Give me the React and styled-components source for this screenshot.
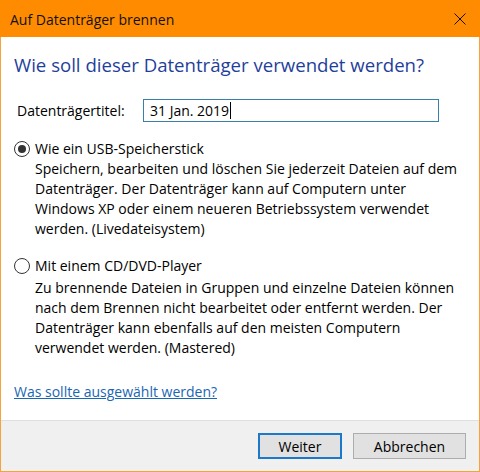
import React from "react";
import styled, { createGlobalStyle } from "styled-components";

const Global = createGlobalStyle`
  html, body {
    margin: 0;
    padding: 0;
    background: #ffffff;
  }
  body {
    font-family: "Open Sans", "Noto Sans", sans-serif;
    color: #000;
  }
`;

const Frame = styled.div`
  width: 480px;
  height: 472px;
  display: flex;
  flex-direction: column;
  box-sizing: border-box;
`;

const TitleBar = styled.div`
  height: 37px;
  flex: none;
  background: #ff8c00;
  display: flex;
  align-items: center;
  justify-content: space-between;
  padding: 0 14px 0 10px;
  box-sizing: border-box;
`;

const Caption = styled.span`
  font-size: 14px;
  color: #111;
  margin-top: 1px;
`;

const Close = styled.svg`
  width: 12px;
  height: 12px;
  margin-top: 1px;
`;

const Panel = styled.div`
  flex: 1;
  display: flex;
  flex-direction: column;
  border: 1px solid #f5a33d;
  border-top: none;
`;

const Content = styled.div`
  flex: 1;
  background: #fff;
  padding: 15px 13px 0 13px;
`;

const Heading = styled.h1`
  margin: 0;
  font-weight: 400;
  font-size: 18.6px;
  line-height: 26px;
  color: #1f3f9b;
`;

const TitleRow = styled.div`
  display: flex;
  align-items: center;
  margin-top: 21px;
  padding-left: 3px;
`;

const Label = styled.label`
  font-size: 14px;
  width: 126px;
  flex: none;
`;

const Field = styled.div`
  width: 296px;
  height: 23px;
  box-sizing: border-box;
  border: 1px solid #3a7eaa;
  display: flex;
  align-items: center;
  padding-left: 6px;
  font-size: 14px;
`;

const Caret = styled.span`
  display: inline-block;
  width: 1px;
  height: 17px;
  background: #000;
  margin-left: 1px;
`;

const Option = styled.div`
  display: grid;
  grid-template-columns: 21px 1fr;
  margin-top: ${(p) => p.$gap}px;
`;

const Radio = styled.span`
  width: 16px;
  height: 16px;
  box-sizing: border-box;
  border: 1px solid #333;
  border-radius: 50%;
  display: flex;
  align-items: center;
  justify-content: center;
  margin-top: 2px;
  &::after {
    content: "";
    width: 8px;
    height: 8px;
    border-radius: 50%;
    background: ${(p) => (p.$checked ? "#333" : "transparent")};
  }
`;

const OptionTitle = styled.div`
  font-size: 14px;
  line-height: 20px;
`;

const OptionText = styled.div`
  grid-column: 2;
  font-size: 14px;
  line-height: 20px;
  margin-top: ${(p) => p.$offset || 0}px;
`;

const Help = styled.a`
  display: inline-block;
  margin-top: 24px;
  font-size: 14px;
  line-height: 20px;
  color: #1a66b3;
  text-decoration: underline;
`;

const Footer = styled.div`
  height: 51px;
  flex: none;
  box-sizing: border-box;
  background: #f0f0f0;
  border-top: 1px solid #dfdfdf;
  display: flex;
  justify-content: flex-end;
  align-items: flex-start;
  gap: 11px;
  padding: 12px 13px 0 0;
`;

const Button = styled.button`
  height: 26px;
  width: ${(p) => p.$w}px;
  box-sizing: border-box;
  font-family: inherit;
  font-size: 14px;
  color: #000;
  background: #e1e1e1;
  border: ${(p) => (p.$default ? "2px solid #1c78c8" : "1px solid #adadad")};
  padding: 0;
`;

export default function App() {
  return (
    <>
      <Global />
      <Frame>
        <TitleBar>
          <Caption>Auf Datenträger brennen</Caption>
          <Close viewBox="0 0 12 12">
            <path d="M0.5 0.5 L11.5 11.5 M11.5 0.5 L0.5 11.5" stroke="#111" strokeWidth="1" fill="none" />
          </Close>
        </TitleBar>
        <Panel>
          <Content>
            <Heading>Wie soll dieser Datenträger verwendet werden?</Heading>
            <TitleRow>
              <Label>Datenträgertitel:</Label>
              <Field>
                31 Jan. 2019
                <Caret />
              </Field>
            </TitleRow>
            <Option $gap={17}>
              <Radio $checked />
              <OptionTitle>Wie ein USB-Speicherstick</OptionTitle>
              <OptionText>
                Speichern, bearbeiten und löschen Sie jederzeit Dateien auf dem
                <br />
                Datenträger. Der Datenträger kann auf Computern unter
                <br />
                Windows XP oder einem neueren Betriebssystem verwendet
                <br />
                werden. (Livedateisystem)
              </OptionText>
            </Option>
            <Option $gap={17}>
              <Radio />
              <OptionTitle>Mit einem CD/DVD-Player</OptionTitle>
              <OptionText $offset={2}>
                Zu brennende Dateien in Gruppen und einzelne Dateien können
                <br />
                nach dem Brennen nicht bearbeitet oder entfernt werden. Der
                <br />
                Datenträger kann ebenfalls auf den meisten Computern
                <br />
                verwendet werden. (Mastered)
              </OptionText>
            </Option>
            <Help href="#">Was sollte ausgewählt werden?</Help>
          </Content>
          <Footer>
            <Button $w={84} $default>
              Weiter
            </Button>
            <Button $w={113}>Abbrechen</Button>
          </Footer>
        </Panel>
      </Frame>
    </>
  );
}
